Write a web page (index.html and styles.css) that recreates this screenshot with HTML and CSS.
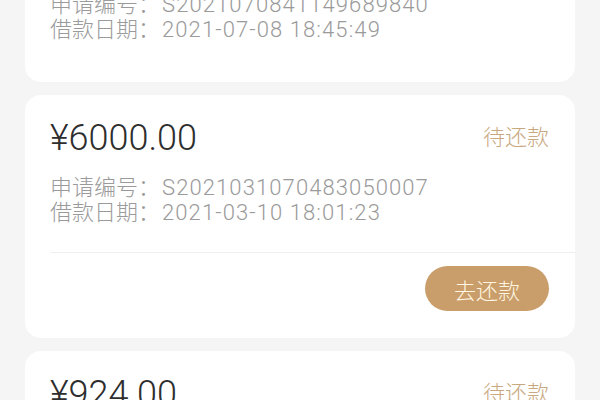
FILE: index.html
```html
<!DOCTYPE html>
<html lang="zh-CN">
<head>
<meta charset="utf-8">
<title>借款记录</title>
<link rel="stylesheet" href="styles.css">
</head>
<body>
<div class="list">
  <div class="card">
    <div class="card-main card-main--plain">
      <div class="head">
        <span class="amount">¥5000.00</span>
        <span class="status">已结清</span>
      </div>
      <div class="info">
        <div class="line">申请编号：<span class="num">S2021070841149689840</span></div>
        <div class="line">借款日期：<span class="num">2021-07-08 18:45:49</span></div>
      </div>
    </div>
  </div>

  <div class="card">
    <div class="card-main">
      <div class="head">
        <span class="amount">¥6000.00</span>
        <span class="status">待还款</span>
      </div>
      <div class="info">
        <div class="line">申请编号：<span class="num">S2021031070483050007</span></div>
        <div class="line">借款日期：<span class="num">2021-03-10 18:01:23</span></div>
      </div>
    </div>
    <div class="foot">
      <span class="btn">去还款</span>
    </div>
  </div>

  <div class="card">
    <div class="card-main">
      <div class="head">
        <span class="amount">¥924.00</span>
        <span class="status">待还款</span>
      </div>
      <div class="info">
        <div class="line">申请编号：<span class="num">S2021021570411280013</span></div>
        <div class="line">借款日期：<span class="num">2021-02-15 10:22:08</span></div>
      </div>
    </div>
    <div class="foot">
      <span class="btn">去还款</span>
    </div>
  </div>
</div>
</body>
</html>
```

FILE: styles.css
```css
html, body {
  margin: 0;
  padding: 0;
}
body {
  background: #f5f5f5;
  font-family: Roboto, "Noto Sans CJK SC", sans-serif;
  font-weight: 300;
  overflow: hidden;
  height: 400px;
}
.list {
  display: flex;
  flex-direction: column;
  gap: 13px;
  padding: 0 25px;
  margin-top: -88px;
}
.card {
  background: #ffffff;
  border-radius: 16px;
}
.card-main {
  padding: 23px 26px 27px 25px;
}
.card-main--plain {
  padding-bottom: 40px;
}
.head {
  display: flex;
  justify-content: space-between;
  align-items: center;
  height: 40px;
}
.amount {
  font-size: 36px;
  line-height: 40px;
  color: #2e2e2e;
}
.status {
  font-size: 22px;
  line-height: 26px;
  color: #c9a880;
}
.info {
  margin-top: 17px;
  font-size: 22px;
  line-height: 25px;
  color: #9a9a9a;
}
.line {
  white-space: nowrap;
}
.num {
  letter-spacing: 1.1px;
  margin-left: 2px;
}
.foot {
  margin-left: 25px;
  border-top: 1px solid #efefef;
  padding: 13px 26px 27px 0;
  display: flex;
  justify-content: flex-end;
}
.btn {
  width: 124px;
  height: 45px;
  border-radius: 23px;
  background: #c99e6a;
  color: #fff5e0;
  font-size: 22px;
  display: flex;
  align-items: center;
  justify-content: center;
}
```
